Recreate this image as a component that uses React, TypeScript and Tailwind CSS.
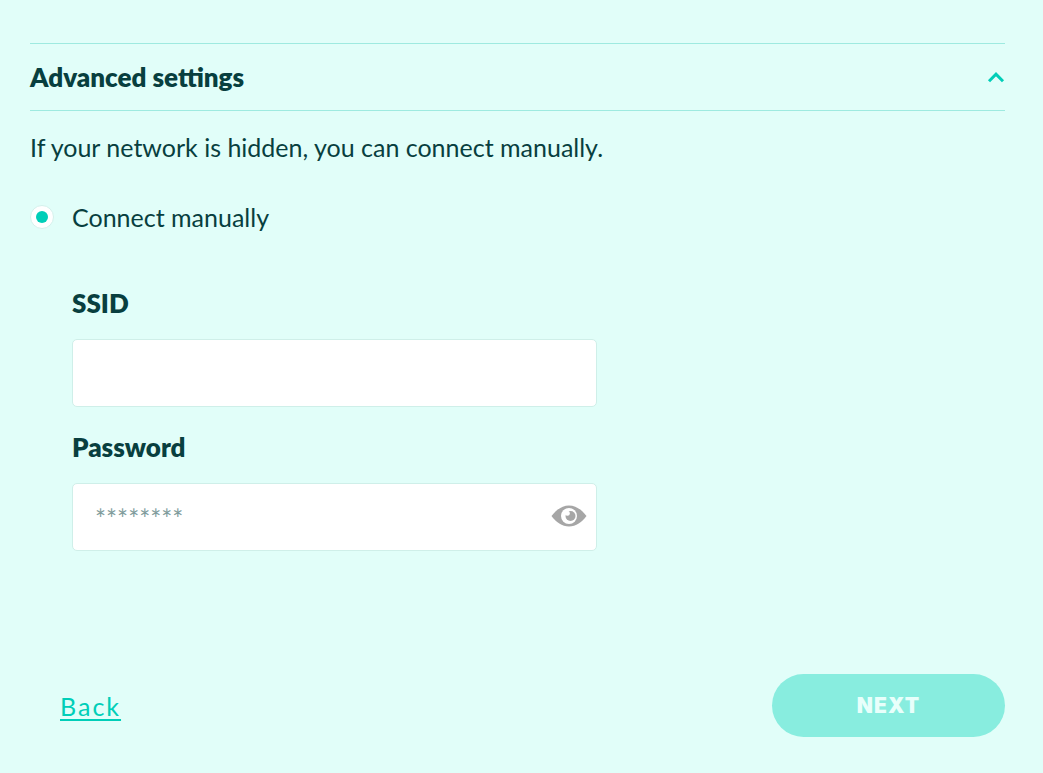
import { useState } from "react";

export default function App() {
  const [open, setOpen] = useState(true);
  const [visible, setVisible] = useState(false);

  return (
    <main className="min-h-screen bg-[#e1fef9] pt-[43px] pr-[38px] pb-9 pl-[30px] font-['Lato','Open_Sans',sans-serif] text-[25px] leading-8 text-[#083f3f]">
      <h2 className="border-y border-[#9eeae0] text-[26px] font-extrabold">
        <button
          type="button"
          aria-expanded={open}
          onClick={() => setOpen(!open)}
          className="flex h-[66px] w-full items-center justify-between text-left"
        >
          Advanced settings
          <svg viewBox="0 0 18 12" className="h-3 w-[18px]" fill="none" stroke="#00ceb8" strokeWidth="3" aria-hidden="true">
            <path d="M2 10.2 9 3.2 16 10.2" />
          </svg>
        </button>
      </h2>

      {open && (
        <section>
          <p className="pt-5">If your network is hidden, you can connect manually.</p>
          <label className="mt-[38px] flex items-center gap-[18px]">
            <input
              type="radio"
              name="connection"
              defaultChecked
              className="grid size-6 shrink-0 appearance-none place-items-center rounded-full border border-[#d4f1ec] bg-white before:size-3 before:rounded-full checked:before:bg-[#00ceb8]"
            />
            Connect manually
          </label>

          <div className="mt-[54px] ml-[42px] flex max-w-[525px] flex-col gap-6">
            <div className="flex flex-col gap-5">
              <label htmlFor="ssid" className="text-[26px] leading-8 font-extrabold">SSID</label>
              <input
                id="ssid"
                type="text"
                className="h-[68px] w-full rounded-[5px] border border-[#cfefe9] bg-white px-[22px]"
              />
            </div>
            <div className="flex flex-col gap-5">
              <label htmlFor="password" className="text-[26px] leading-8 font-extrabold">Password</label>
              <div className="flex h-[68px] items-center rounded-[5px] border border-[#cfefe9] bg-white pr-[9px] pl-[22px]">
                <input
                  id="password"
                  type={visible ? "text" : "password"}
                  placeholder="********"
                  className="min-w-0 flex-1 bg-transparent pt-1 outline-none placeholder:text-[26px] placeholder:text-[#7f9c9c]"
                />
                <button type="button" aria-label="Show password" className="pb-0.5" onClick={() => setVisible(!visible)}>
                  <svg viewBox="0 0 36 22" className="h-[22px] w-9" aria-hidden="true">
                    <path d="M.5 11C5 5 11 .5 18 .5S31 5 35.500 11C31 17 25 21.500 18 21.500S5 17 .5 11Z" fill="#a6a6a6" />
                    <circle cx="18" cy="11" r="8" fill="#fff" />
                    <circle cx="19.500" cy="11" r="5" fill="#a6a6a6" />
                    <circle cx="16.300" cy="8.300" r="2.500" fill="#fff" />
                  </svg>
                </button>
              </div>
            </div>
          </div>
        </section>
      )}

      <footer className="mt-[123px] flex items-center justify-between pl-[30px]">
        <a href="#back" className="tracking-[2px] text-[#00ceb8] underline decoration-2 underline-offset-3">Back</a>
        <button type="button" className="h-[63px] w-[233px] rounded-full bg-[#88eddf] font-['Inter',sans-serif] text-[21px] font-black tracking-wider text-[#e8fffb]">
          NEXT
        </button>
      </footer>
    </main>
  );
}
